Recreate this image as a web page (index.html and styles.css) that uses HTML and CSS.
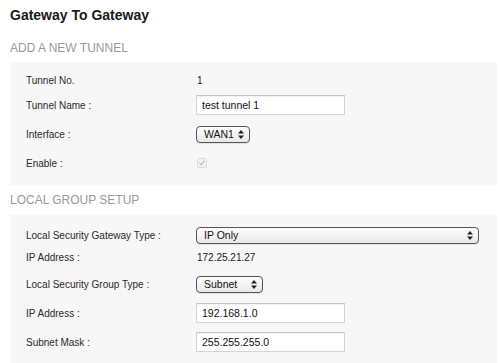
FILE: index.html
```html
<!DOCTYPE html>
<html lang="en">
<head>
    <meta charset="UTF-8">
    <title>Gateway To Gateway</title>
    <link rel="stylesheet" href="styles.css">
</head>
<body>
    <h1 class="title">Gateway To Gateway</h1>

    <!-- 添加隧道 -->
    <h2 class="section">ADD A NEW TUNNEL</h2>
    <div class="panel panel-tunnel">
        <div class="row">
            <span class="label">Tunnel No.</span>
            <span class="value">1</span>
        </div>
        <div class="row">
            <span class="label">Tunnel Name :</span>
            <input class="text" type="text" value="test tunnel 1">
        </div>
        <div class="row">
            <span class="label">Interface :</span>
            <div class="select select-wan">
                <span>WAN1</span>
                <svg class="arrows" width="6" height="9" viewBox="0 0 6 9"><path d="M3 0L6 3.5H0Z M3 9L6 5.5H0Z" fill="#222"/></svg>
            </div>
        </div>
        <div class="row">
            <span class="label">Enable :</span>
            <span class="check">
                <svg width="8" height="8" viewBox="0 0 8 8"><path d="M1.5 4.2L3.2 5.8L6.5 1.8" fill="none" stroke="#b8b8b8" stroke-width="1.1"/></svg>
            </span>
        </div>
    </div>

    <!-- 本地组设置 -->
    <h2 class="section">LOCAL GROUP SETUP</h2>
    <div class="panel panel-local">
        <div class="row">
            <span class="label">Local Security Gateway Type :</span>
            <div class="select select-wide">
                <span>IP Only</span>
                <svg class="arrows" width="6" height="9" viewBox="0 0 6 9"><path d="M3 0L6 3.5H0Z M3 9L6 5.5H0Z" fill="#222"/></svg>
            </div>
        </div>
        <div class="row">
            <span class="label">IP Address :</span>
            <span class="value">172.25.21.27</span>
        </div>
        <div class="row">
            <span class="label">Local Security Group Type :</span>
            <div class="select select-subnet">
                <span>Subnet</span>
                <svg class="arrows" width="6" height="9" viewBox="0 0 6 9"><path d="M3 0L6 3.5H0Z M3 9L6 5.5H0Z" fill="#222"/></svg>
            </div>
        </div>
        <div class="row">
            <span class="label">IP Address :</span>
            <input class="text" type="text" value="192.168.1.0">
        </div>
        <div class="row">
            <span class="label">Subnet Mask :</span>
            <input class="text" type="text" value="255.255.255.0">
        </div>
    </div>
</body>
</html>
```

FILE: styles.css
```css
* {
    margin: 0;
    padding: 0;
    box-sizing: border-box;
}
body {
    padding: 5px 3px 0 10px;
    font-family: "Liberation Sans", Arial, sans-serif;
    color: #222;
    background-color: #fff;
}
.title {
    font-size: 14px;
    line-height: 20px;
    font-weight: bold;
    color: #1a1a1a;
}
.section {
    font-size: 12px;
    line-height: 20px;
    font-weight: normal;
    color: #999;
    margin: 13px 0 4px;
}
.panel-tunnel + .section {
    margin: 5px 0 5px;
}
.panel {
    background-color: #f7f7f7;
    padding-left: 16px;
    display: grid;
}
/* 每行高度按截图调整 */
.panel-tunnel {
    padding-top: 6px;
    padding-bottom: 9px;
    grid-template-rows: 24px 26px 32px 26px;
}
.panel-local {
    padding-top: 8px;
    padding-bottom: 10px;
    grid-template-rows: 24px 21px 32px 26px 32px;
}
.row {
    display: flex;
    align-items: center;
    font-size: 10px;
}
.label {
    width: 170px;
    flex-shrink: 0;
    color: #2a2a2a;
}
.value {
    color: #1a1a1a;
    padding-left: 1px;
}
.text {
    width: 149px;
    height: 20px;
    border: 1px solid #d4d4d4;
    border-top-color: #c4c4c4;
    background-color: #fff;
    box-shadow: inset 0 1px 1px rgba(0, 0, 0, 0.06);
    font-family: "Liberation Sans", Arial, sans-serif;
    font-size: 10.5px;
    color: #111;
    padding: 0 5px;
    outline: none;
}
.select {
    position: relative;
    height: 17px;
    border: 1px solid #555;
    border-radius: 4px;
    background: linear-gradient(#fdfdfd, #e9e9e9);
    box-shadow: 0 1px 0 rgba(0, 0, 0, 0.08);
    font-size: 10.5px;
    color: #111;
    display: flex;
    align-items: center;
    padding-left: 7px;
}
.select .arrows {
    position: absolute;
    right: 5px;
    top: 3px;
}
.select-wan {
    width: 54px;
}
.select-wide {
    width: 283px;
}
.select-subnet {
    width: 67px;
}
.check {
    width: 10px;
    height: 10px;
    margin-left: 1px;
    border: 1px solid #dcdcdc;
    border-radius: 2px;
    background-color: #f2f2f2;
    display: flex;
    align-items: center;
    justify-content: center;
}
```
